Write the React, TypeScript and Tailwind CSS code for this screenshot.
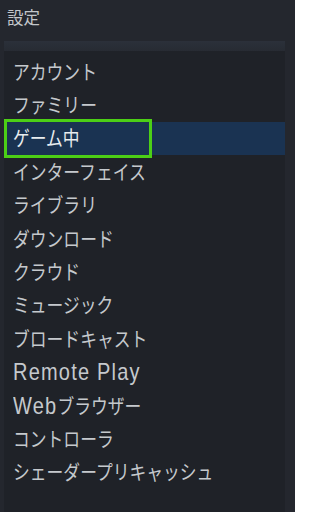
type Seg = { t: string; latin?: boolean };

const items: Seg[][] = [
  [{ t: "アカウント" }],
  [{ t: "ファミリー" }],
  [{ t: "ゲーム中" }],
  [{ t: "インターフェイス" }],
  [{ t: "ライブラリ" }],
  [{ t: "ダウンロード" }],
  [{ t: "クラウド" }],
  [{ t: "ミュージック" }],
  [{ t: "ブロードキャスト" }],
  [{ t: "Remote Play", latin: true }],
  [{ t: "Web", latin: true }, { t: "ブラウザー" }],
  [{ t: "コントローラ" }],
  [{ t: "シェーダープリキャッシュ" }],
];

function Label({ segs }: { segs: Seg[] }) {
  return (
    <span className="inline-block origin-center scale-y-[1.2] whitespace-nowrap text-[16.8px] leading-none">
      {segs.map((s, i) =>
        s.latin ? (
          <span
            key={i}
            className="text-[20px] tracking-[1.2px]"
            style={{ fontFamily: '"Liberation Sans", Arial, sans-serif' }}
          >
            {s.t}
          </span>
        ) : (
          <span key={i}>{s.t}</span>
        )
      )}
    </span>
  );
}

export default function App() {
  return (
    <div
      className="flex h-[512px] w-[295px] flex-col overflow-hidden bg-[#24272e]"
      style={{ fontFamily: '"Noto Sans CJK JP", "Noto Sans", sans-serif' }}
    >
      <div className="flex h-[41px] items-start px-[7px] pt-[5px] text-[16.5px] text-[#c3c6ca]">
        設定
      </div>
      <div className="ml-[4px] mr-[10px] flex flex-1 flex-col bg-[#1f2228]">
        <div className="h-[10px] bg-gradient-to-b from-[#2b303a] to-[#272b33]" />
        <ul className="flex flex-col pt-[4px]">
          {items.map((segs, idx) => {
            const active = idx === 2;
            return (
              <li
                key={idx}
                className={`flex h-[33.4px] items-center ${
                  active ? "bg-[#1a3352] text-[#e8ecef]" : "text-[#c5c9cd]"
                }`}
              >
                {active ? (
                  <span className="flex h-[39px] w-[148px] items-center border-[3px] border-[#4ccf16] pl-[6px]">
                    <Label segs={segs} />
                  </span>
                ) : (
                  <span className="pl-[9px]">
                    <Label segs={segs} />
                  </span>
                )}
              </li>
            );
          })}
        </ul>
      </div>
    </div>
  );
}
